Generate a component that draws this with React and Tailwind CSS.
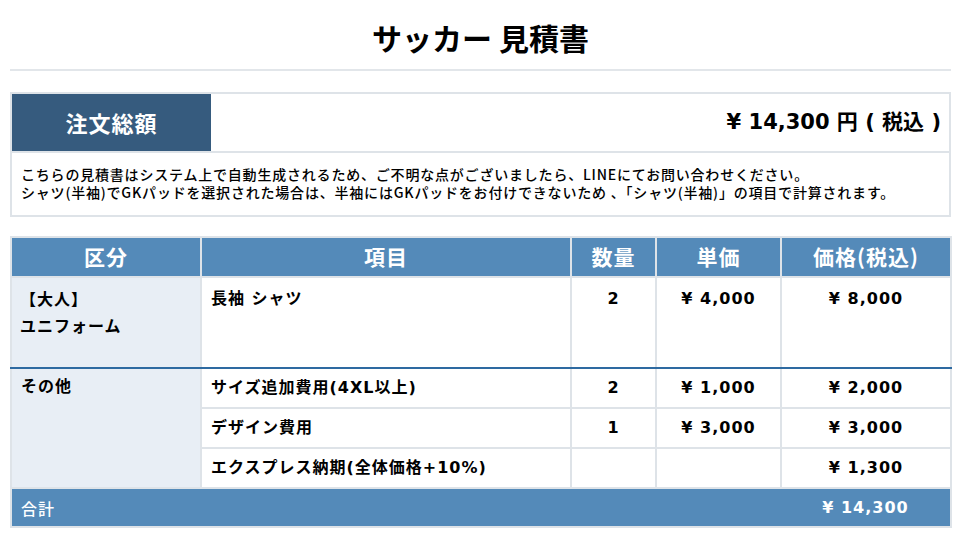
import React from 'react';

const font = { fontFamily: '"Noto Sans CJK JP", "Noto Sans", sans-serif' };
const wide = { fontFamily: '"DejaVu Sans", "Noto Sans CJK JP", sans-serif' };

const rows = [
  { item: 'サイズ追加費用(4XL以上)', qty: '2', unit: '¥ 1,000', price: '¥ 2,000' },
  { item: 'デザイン費用', qty: '1', unit: '¥ 3,000', price: '¥ 3,000' },
  { item: 'エクスプレス納期(全体価格+10%)', qty: '', unit: '', price: '¥ 1,300' },
];

const App = () => {
  return (
    <div className="w-[961px] h-[538px] bg-white px-[10px] text-black overflow-hidden" style={font}>
      {/* Title */}
      <h1 className="text-center text-[30px] font-bold leading-none pt-[22px] pb-[17px]">サッカー 見積書</h1>
      <div className="h-[2px] bg-[#e2e6ea]" />

      {/* Summary */}
      <div className="mt-[21px] border-2 border-[#dee3e8]">
        <div className="flex h-[57px]">
          <div className="w-[199px] bg-[#365b7e] text-white flex items-center justify-center text-[22px] tracking-[1px] font-bold">
            注文総額
          </div>
          <div className="flex-1 flex items-center justify-end pr-[8px] text-[21px] font-bold" style={wide}>
            ¥ 14,300 円 ( 税込 )
          </div>
        </div>
        <div className="border-t-2 border-[#dee3e8] h-[64px] px-[9px] pt-[12px] text-[14px] tracking-[0.8px] font-medium leading-[18px]">
          <p>こちらの見積書はシステム上で自動生成されるため、ご不明な点がございましたら、LINEにてお問い合わせください。</p>
          <p>シャツ(半袖)でGKパッドを選択された場合は、半袖にはGKパッドをお付けできないため 、「シャツ(半袖)」の項目で計算されます。</p>
        </div>
      </div>

      {/* Table */}
      <table className="mt-[19px] w-[940px] border-collapse border-2 border-[#dee3e8] table-fixed">
        <colgroup>
          <col className="w-[190px]" />
          <col className="w-[370px]" />
          <col className="w-[85px]" />
          <col className="w-[125px]" />
          <col className="w-[170px]" />
        </colgroup>
        <thead>
          <tr className="h-[40px] bg-[#548ab9] text-white text-[21px] tracking-[1px] font-bold">
            <th className="border-2 border-[#dee3e8] font-bold">区分</th>
            <th className="border-2 border-[#dee3e8] font-bold">項目</th>
            <th className="border-2 border-[#dee3e8] font-bold">数量</th>
            <th className="border-2 border-[#dee3e8] font-bold">単価</th>
            <th className="border-2 border-[#dee3e8] font-bold">価格(税込)</th>
          </tr>
        </thead>
        <tbody className="text-[16px] tracking-[1px] font-bold" style={wide}>
          <tr className="h-[91px] align-top">
            <td className="bg-[#e8eef5] border-2 border-[#dee3e8] border-b-[#2e6aa1] pl-[8px] pt-[8px] leading-[27px]">
              【大人】<br />ユニフォーム
            </td>
            <td className="border-2 border-[#dee3e8] border-b-[#2e6aa1] pl-[9px] pt-[9px]">長袖 シャツ</td>
            <td className="border-2 border-[#dee3e8] border-b-[#2e6aa1] text-center pt-[9px]">2</td>
            <td className="border-2 border-[#dee3e8] border-b-[#2e6aa1] text-center pt-[9px]">¥ 4,000</td>
            <td className="border-2 border-[#dee3e8] border-b-[#2e6aa1] text-center pt-[9px]">¥ 8,000</td>
          </tr>
          {rows.map((r, i) => (
            <tr key={i} className="h-[40px]">
              {i === 0 && (
                <td rowSpan={3} className="bg-[#e8eef5] border-2 border-[#dee3e8] border-t-[#2e6aa1] align-top pl-[9px] pt-[6px]">
                  その他
                </td>
              )}
              <td className={`border-2 border-[#dee3e8] pl-[9px] ${i === 0 ? 'border-t-[#2e6aa1]' : ''}`}>{r.item}</td>
              <td className={`border-2 border-[#dee3e8] text-center ${i === 0 ? 'border-t-[#2e6aa1]' : ''}`}>{r.qty}</td>
              <td className={`border-2 border-[#dee3e8] text-center ${i === 0 ? 'border-t-[#2e6aa1]' : ''}`}>{r.unit}</td>
              <td className={`border-2 border-[#dee3e8] text-center ${i === 0 ? 'border-t-[#2e6aa1]' : ''}`}>{r.price}</td>
            </tr>
          ))}
          <tr className="h-[39px] bg-[#548ab9] text-white">
            <td colSpan={4} className="pl-[9px] font-medium" style={font}>合計</td>
            <td className="text-center">¥ 14,300</td>
          </tr>
        </tbody>
      </table>
    </div>
  );
};

export default App;
